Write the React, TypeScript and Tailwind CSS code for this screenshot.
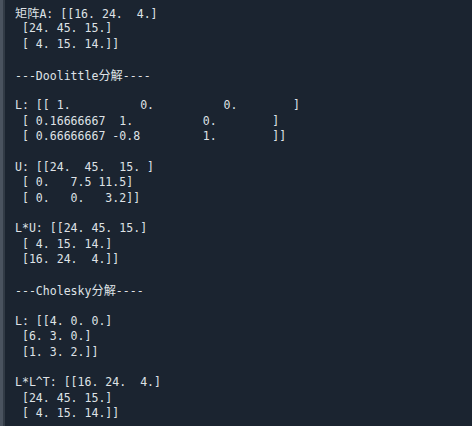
const lines: string[] = [
  "矩阵A: [[16. 24.  4.]",
  " [24. 45. 15.]",
  " [ 4. 15. 14.]]",
  "",
  "---Doolittle分解----",
  "",
  "L: [[ 1.          0.          0.        ]",
  " [ 0.16666667  1.          0.        ]",
  " [ 0.66666667 -0.8         1.        ]]",
  "",
  "U: [[24.  45.  15. ]",
  " [ 0.   7.5 11.5]",
  " [ 0.   0.   3.2]]",
  "",
  "L*U: [[24. 45. 15.]",
  " [ 4. 15. 14.]",
  " [16. 24.  4.]]",
  "",
  "---Cholesky分解----",
  "",
  "L: [[4. 0. 0.]",
  " [6. 3. 0.]",
  " [1. 3. 2.]]",
  "",
  "L*L^T: [[16. 24.  4.]",
  " [24. 45. 15.]",
  " [ 4. 15. 14.]]",
];

// split out CJK runs so they can be sized a touch larger than the mono text
function Line({ text }: { text: string }) {
  const parts = text.split(/([\u4e00-\u9fff]+)/);
  return (
    <div className="h-[15.4px] leading-[15.4px] whitespace-pre">
      {parts.map((p, i) =>
        /[\u4e00-\u9fff]/.test(p) ? (
          <span key={i} className="text-[12.2px] font-['Noto_Sans_CJK_SC',sans-serif]">
            {p}
          </span>
        ) : (
          <span key={i}>{p}</span>
        )
      )}
      {text === "" && " "}
    </div>
  );
}

export default function App() {
  return (
    <div className="flex w-[472px] h-[426px] overflow-hidden bg-[#1b2430]">
      <div className="w-[3px] bg-[#4a535f]" />
      <div className="w-[2px] bg-[#323b46]" />
      <div className="pl-[10px] pt-[6px] text-[11.55px] text-[#dfe2e6] font-['DejaVu_Sans_Mono','Noto_Sans_CJK_SC',monospace]">
        {lines.map((l, i) => (
          <Line key={i} text={l} />
        ))}
      </div>
    </div>
  );
}
